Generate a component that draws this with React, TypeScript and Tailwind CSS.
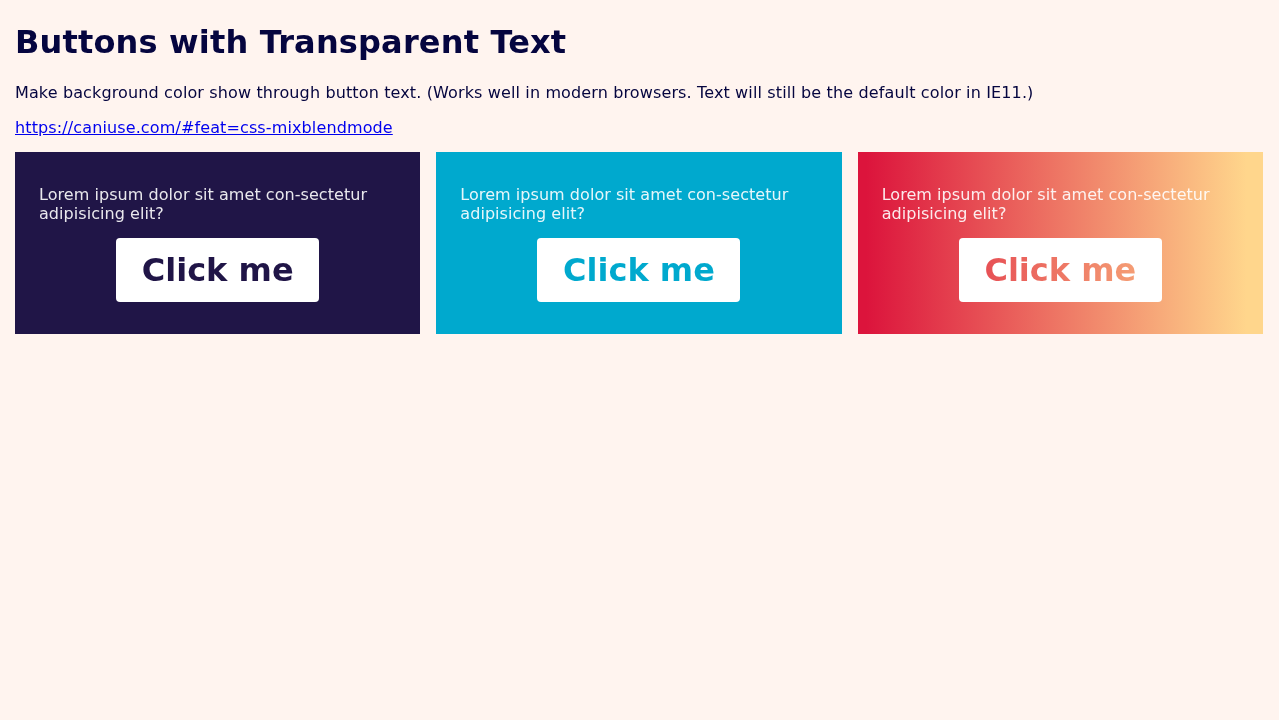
export default function App() {
  const cards = [
    { bg: "bg-[#201547]" },
    { bg: "bg-[#00a9ce]" },
    { bg: "bg-[linear-gradient(to_right,#dc143c_2%,#ffd68c_96%)]" },
  ]

  return (
    <div className="min-h-screen bg-[#fff4ef] pl-[15px] pr-[16px] pt-[24px] text-[#05053f] font-['DejaVu_Sans',sans-serif]">
      <h1 className="text-[32px] leading-[37px] font-bold tracking-[0.17px]">Buttons with Transparent Text</h1>
      <p className="mt-[22px] text-[16px] leading-[19px] tracking-[0.13px]">
        Make background color show through button text. (Works well in modern browsers. Text will still be the default color in IE11.)
      </p>
      <p className="mt-[16px] text-[16px] leading-[19px] tracking-[0.12px]">
        <a href="#" className="text-[#0000ee] underline">https://caniuse.com/#feat=css-mixblendmode</a>
      </p>

      <div className="mt-[15px] grid grid-cols-3 gap-[16px]">
        {cards.map((c, i) => (
          <div key={i} className={`${c.bg} px-[24px] pt-[33px] pb-[32px]`}>
            <p className="text-[16px] leading-[19px] text-white/90 tracking-[0.05px]">
              Lorem ipsum dolor sit amet con-sectetur adipisicing elit?
            </p>
            <div className="mt-[15px] flex justify-center">
              <button className="h-[64px] w-[203px] rounded-[4px] bg-white text-black text-[32px] leading-[37px] font-bold mix-blend-screen">
                Click me
              </button>
            </div>
          </div>
        ))}
      </div>
    </div>
  )
}
